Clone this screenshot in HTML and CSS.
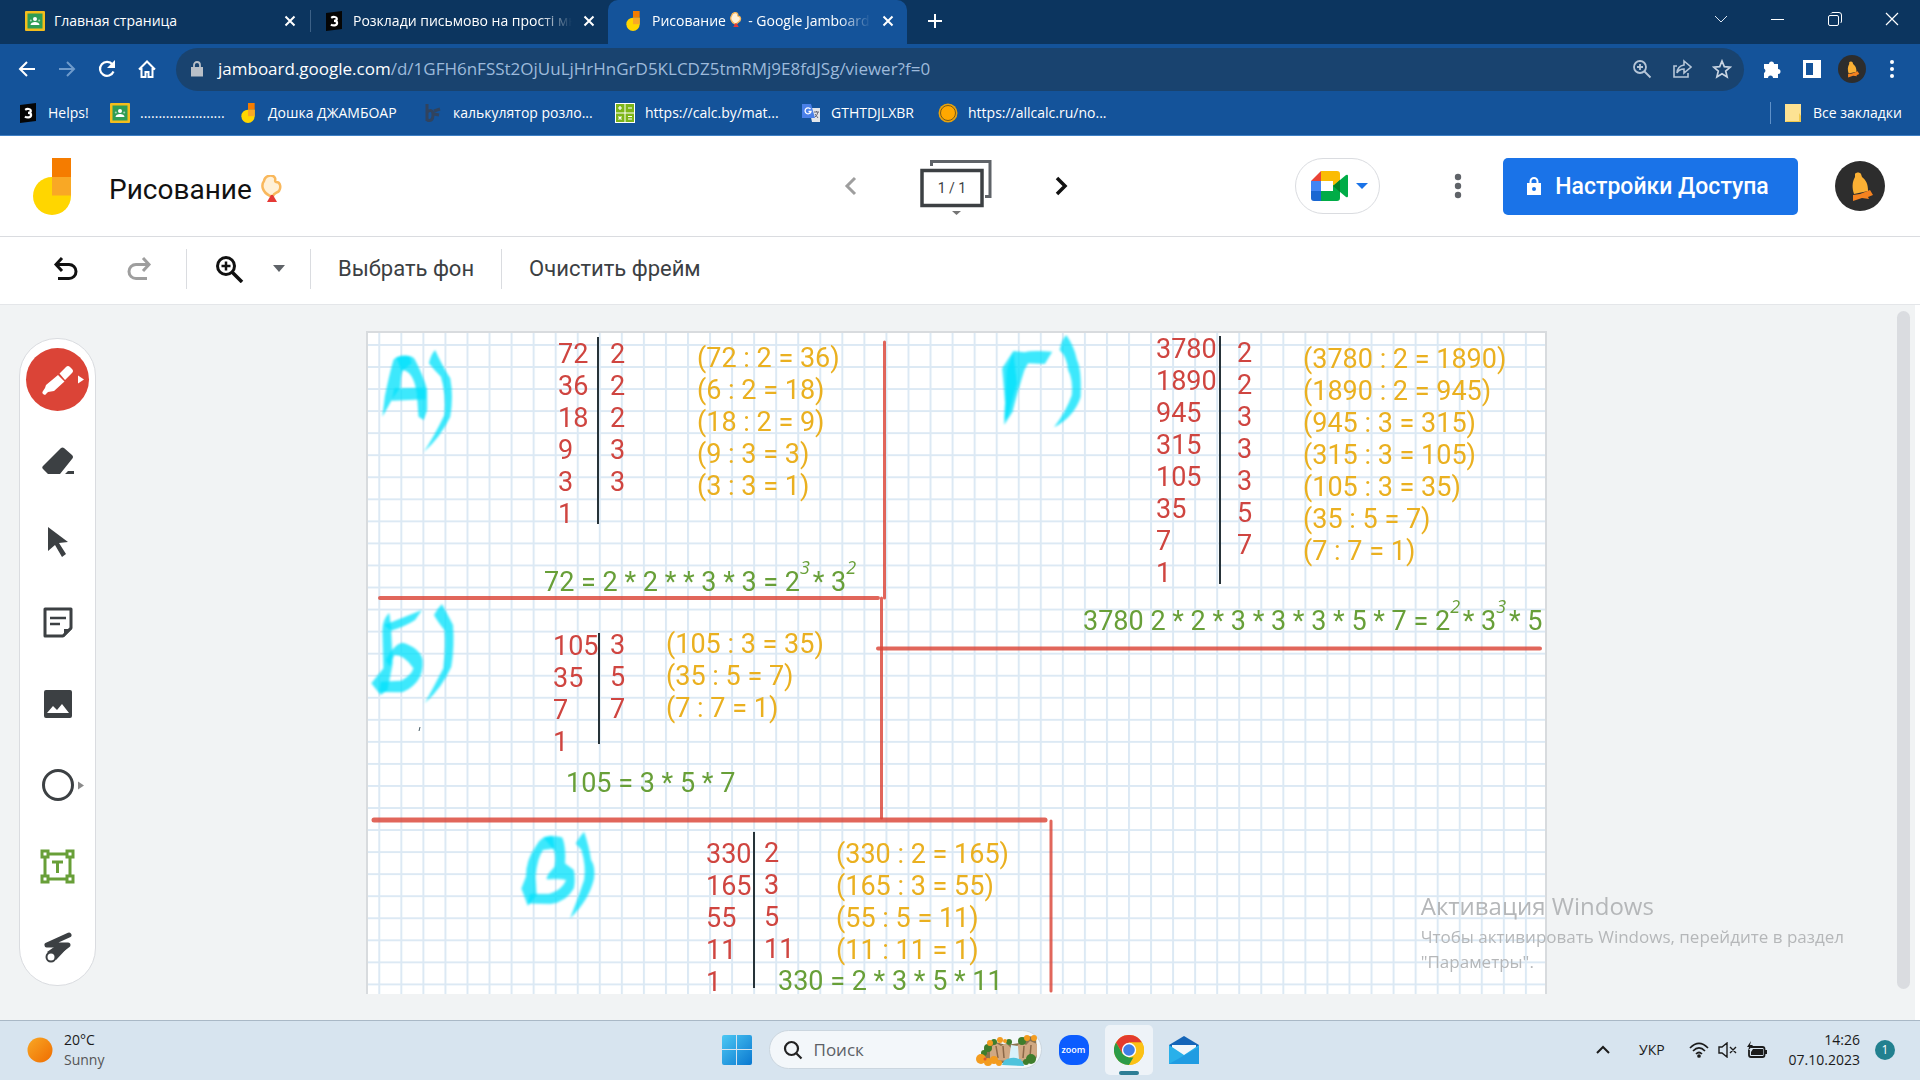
FILE: index.html
```html
<!DOCTYPE html>
<html lang="ru">
<head>
<meta charset="utf-8">
<title>Рисование - Google Jamboard</title>
<link rel="stylesheet" href="styles.css">
</head>
<body>
<svg width="0" height="0" class="defs" aria-hidden="true">
  <symbol id="classroom" viewBox="0 0 20 20"><rect width="20" height="20" rx="1" fill="#f4bd1c"/><rect x="2.500" y="2.500" width="15" height="15" fill="#2f9d55"/><circle cx="10" cy="8" r="2" fill="#fff"/><path d="M5.500 14c0-4 9-4 9 0z" fill="#fff"/><circle cx="5.800" cy="9.500" r="1" fill="#a5d6b4"/><circle cx="14.200" cy="9.500" r="1" fill="#a5d6b4"/></symbol>
  <symbol id="znanija" viewBox="0 0 20 20"><path d="M2 2l16-2v18l-16 2z" fill="#050505"/><path d="M7.200 6.800c2-1.500 5.600-1 5.600 1.200 0 1.400-1.500 1.900-2.800 1.900 1.600 0 3.100.6 3.100 2.200 0 2.500-4 3-6.200 1.500" fill="none" stroke="#fff" stroke-width="2.200"/></symbol>
  <symbol id="jam" viewBox="0 0 38 57"><path d="M19 0h19v19H19z" fill="#f57c00"/><path d="M19 19h19v19A19 19 0 1 1 19 19z" fill="#ffd600"/><path d="M19 19h19v18.500H19z" fill="#f9a825"/></symbol>
  <symbol id="x" viewBox="0 0 14 14"><path d="M2.500 2.500l9 9m0-9l-9 9" fill="none" stroke="currentColor" stroke-width="2"/></symbol>
  <symbol id="bell" viewBox="0 0 50 50"><circle cx="25" cy="25" r="25" fill="#2d2d2d"/><path d="M20 13c1-2 5-2 6 0l1 3c4 3 6 7 6 14l-14 3c-2-6-2-12 1-17z" fill="#fbb034"/><path d="M18 34l7-1 10-4 3 5-5 2 1 2-7-1-9 3v-3z" fill="#f5821f"/></symbol>
  <symbol id="balloon" viewBox="0 0 22 28"><path d="M9 21C1 17 0 10 3 6 4 0 12-1 14 3c1 2-1 3 1 4 5 0 5 6 3 9-2 2-5 2-6 5z" fill="#fff1d8" stroke="#f9b85c" stroke-width="2.500"/><path d="M10 20l-4 7h10l-4-7z" fill="#e53935"/></symbol>
</svg>

<header class="chrome">
  <div class="tabs">
    <div class="tab"><svg class="fav"><use href="#classroom"/></svg><span class="tab-title">Главная страница</span><button class="tab-close" aria-label="Закрыть"><svg><use href="#x"/></svg></button></div>
    <div class="tab tab-split"><svg class="fav"><use href="#znanija"/></svg><span class="tab-title fade">Розклади письмово на прості множники</span><button class="tab-close" aria-label="Закрыть"><svg><use href="#x"/></svg></button></div>
    <div class="tab active"><svg class="fav"><use href="#jam"/></svg><span class="tab-title fade">Рисование <svg class="mini"><use href="#balloon"/></svg> - Google Jamboard</span><button class="tab-close" aria-label="Закрыть"><svg><use href="#x"/></svg></button></div>
    <button class="new-tab" aria-label="Новая вкладка"><svg width="16" height="16"><path d="M8 1v14M1 8h14" stroke="#fff" stroke-width="2"/></svg></button>
    <div class="win">
      <button aria-label="Вкладки"><svg width="14" height="14"><path d="M1 4l6 6 6-6" fill="none" stroke="#dce6f2"/></svg></button>
      <button aria-label="Свернуть"><svg width="14" height="14"><path d="M0 7.500h13" stroke="#fff"/></svg></button>
      <button aria-label="Окно"><svg width="14" height="14" fill="none" stroke="#fff"><rect x=".5" y="3.500" width="10" height="10" rx="1.500"/><path d="M3 1.500q.5-1 2-1h6q2.500 0 2.500 2.500v6q0 1.500-1 2"/></svg></button>
      <button aria-label="Закрыть окно"><svg width="14" height="14"><path d="M1 1l12 12M13 1L1 13" stroke="#fff" stroke-width="1.200"/></svg></button>
    </div>
  </div>
  <div class="nav">
    <button aria-label="Назад"><svg class="i20" viewBox="0 0 20 20"><path d="M18 10H3m7-7l-7 7 7 7" fill="none" stroke="#fff" stroke-width="2"/></svg></button>
    <button aria-label="Вперёд"><svg class="i20" viewBox="0 0 20 20"><path d="M2 10h15m-7-7l7 7-7 7" fill="none" stroke="#6f9bcb" stroke-width="2"/></svg></button>
    <button aria-label="Обновить"><svg class="i20" viewBox="0 0 20 20"><path d="M16.500 12.500A7 7 0 1 1 15.500 5.500" fill="none" stroke="#fff" stroke-width="2.200"/><path d="M18 1v8h-8z" fill="#fff"/></svg></button>
    <button aria-label="Домой"><svg class="i20" viewBox="0 0 20 20"><path d="M2 10.500l8-8 8 8M4.500 9v9h4v-5h3v5h4V9" fill="none" stroke="#fff" stroke-width="2"/></svg></button>
    <div class="omni">
      <svg class="lock" viewBox="0 0 12 16"><path d="M0 6h12v9.500H0z" fill="#b9c0c8"/><path d="M3 6V4a3 3 0 0 1 6 0v2" fill="none" stroke="#b9c0c8" stroke-width="1.800"/></svg>
      <span class="url"><b>jamboard.google.com</b>/d/1GFH6nFSSt2OjUuLjHrHnGrD5KLCDZ5tmRMj9E8fdJSg/viewer?f=0</span>
      <input class="omni-input" type="text" aria-label="Адресная строка">
      <button aria-label="Масштаб"><svg class="i20" viewBox="0 0 20 20" fill="none" stroke="#b6c6d8" stroke-width="1.800"><circle cx="8" cy="8" r="6"/><path d="M12.500 12.500l6 6M8 5v6M5 8h6"/></svg></button>
      <button aria-label="Поделиться"><svg class="i20" viewBox="0 0 20 20" fill="none" stroke="#b6c6d8" stroke-width="1.600"><path d="M5 7H2v11h14v-4"/><path d="M12 2l7 6-7 6v-4q-5 0-7 4 .5-7 7-8z"/></svg></button>
      <button aria-label="Закладка"><svg class="i20" viewBox="0 0 20 20" fill="none" stroke="#c8d4e2" stroke-width="1.700"><path d="M10 2l2.300 5.600 6 .5-4.600 3.900 1.400 5.900-5.100-3.200-5.100 3.200 1.400-5.900L1.700 8.100l6-.5z"/></svg></button>
    </div>
    <button aria-label="Расширения"><svg class="i20" viewBox="0 0 20 20"><path d="M2 5h5a2.500 2.500 0 1 1 5 0h4v5a2.500 2.500 0 1 1 0 5v4h-5a2.500 2.500 0 0 0-5 0H2v-5a2.500 2.500 0 0 0 0-4.500z" fill="#fff"/></svg></button>
    <button aria-label="Боковая панель"><svg class="i20" viewBox="0 0 20 20"><path d="M1 1h18v18H1zm3 3v12h7V4z" fill="#fff" fill-rule="evenodd"/></svg></button>
    <button aria-label="Профиль"><svg class="i28"><use href="#bell"/></svg></button>
    <button aria-label="Меню"><svg class="i20" viewBox="0 0 20 20" fill="#fff"><circle cx="10" cy="3" r="2"/><circle cx="10" cy="10" r="2"/><circle cx="10" cy="17" r="2"/></svg></button>
  </div>
  <nav class="marks">
    <a href="#" class="m1"><svg><use href="#znanija"/></svg>Helps!</a>
    <a href="#" class="m2"><svg><use href="#classroom"/></svg>.......................</a>
    <a href="#" class="m3"><svg><use href="#jam"/></svg>Дошка ДЖАМБОАР</a>
    <a href="#" class="m4"><svg viewBox="0 0 20 20"><path d="M4 1v17M4 9q6-4 6 3t-6 5M11 8l6-2M11 11l5 1" fill="none" stroke="#30435e" stroke-width="3"/></svg>калькулятор розло...</a>
    <a href="#" class="m5"><svg viewBox="0 0 20 20"><rect width="20" height="20" fill="#fff"/><path d="M1 1h8.500v8.500H1zM10.500 1H19v8.500h-8.500zM1 10.500h8.500V19H1zM10.500 10.500H19V19h-8.500z" fill="#7cb518"/><path d="M3 5h4M5 3v4M13 5h4M3.500 13.500l3 3m0-3l-3 3M13 13.500h4M13 16h4" stroke="#fff" stroke-width="1.200"/></svg>https://calc.by/mat...</a>
    <a href="#" class="m6"><svg viewBox="0 0 20 20"><path d="M8 5h11v14h-8z" fill="#e3e6ea"/><path d="M1 1h9l4 14H1z" fill="#4a80e8"/><path d="M9.500 6a3 3 0 1 0 .5 2.500H7.500" fill="none" stroke="#fff" stroke-width="1.300"/><path d="M13 9h5M15.500 8v1m1.500 0q-1 4-3 5m0-3l3 4" fill="none" stroke="#667" stroke-width="1"/></svg>GTHTDJLXBR</a>
    <a href="#" class="m7"><svg viewBox="0 0 20 20"><circle cx="10" cy="10" r="9.500" fill="#e8a30c"/><circle cx="10" cy="10" r="7.500" fill="#ffa800" stroke="#7a5a18"/></svg>https://allcalc.ru/no...</a>
    <a href="#" class="all"><svg viewBox="0 0 20 20"><path d="M2 1h16v18H2z" fill="#fde293"/><path d="M16 10l2 3v6H2l2-1h12z" fill="#f2c94c"/></svg>Все закладки</a>
  </nav>
</header>

<section class="head">
  <div class="brand">
    <svg class="logo"><use href="#jam"/></svg>
    <h1>Рисование <svg class="emoji"><use href="#balloon"/></svg></h1>
  </div>
  <div class="pager">
    <button aria-label="Предыдущий кадр"><svg width="14" height="20" viewBox="0 0 14 20"><path d="M11 2l-8 8 8 8" fill="none" stroke="#9e9e9e" stroke-width="3"/></svg></button>
    <button class="frames" aria-label="Кадры"><svg width="72" height="58" viewBox="0 0 72 58" fill="none"><path d="M11.500 9V4.500H70V39.500h-5" stroke="#5f6368" stroke-width="3"/><rect x="2" y="13.500" width="60" height="35" stroke="#3c4043" stroke-width="3.500"/><path d="M32 54h9l-4.500 4z" fill="#757575"/></svg><span>1 / 1</span></button>
    <button aria-label="Следующий кадр"><svg width="14" height="20" viewBox="0 0 14 20"><path d="M3 2l8 8-8 8" fill="none" stroke="#111" stroke-width="3.500"/></svg></button>
  </div>
  <div class="actions">
    <button class="meet" aria-label="Google Meet"><svg width="38" height="30" viewBox="0 0 38 30"><path d="M10 0v10H0z" fill="#ea4335"/><path d="M0 10h10v10H0z" fill="#4285f4"/><path d="M0 20h10v10H3q-3 0-3-3z" fill="#1967d2"/><path d="M10 0h16q3 0 3 3v8l-7 5v-6H10z" fill="#fbbc04"/><path d="M10 20h12v-6l7 4v9q0 3-3 3H10z" fill="#00ac47"/><path d="M22 15L35 4q2-1 2 1v20q0 2-2 1z" fill="#00ac47"/><path d="M22 15l7-6v12z" fill="#00832d"/></svg><svg width="12" height="6"><path d="M0 0h12l-6 6z" fill="#1a73e8"/></svg></button>
    <button class="more" aria-label="Ещё"><svg width="8" height="26" fill="#5f6368"><circle cx="4" cy="4" r="3.200"/><circle cx="4" cy="13" r="3.200"/><circle cx="4" cy="22" r="3.200"/></svg></button>
    <button class="share"><svg width="16" height="18" viewBox="0 0 16 18"><path d="M1 6h14v12H1z" fill="#fff"/><path d="M4.500 6V4.500a3.500 3.500 0 0 1 7 0V6" fill="none" stroke="#fff" stroke-width="2"/><circle cx="8" cy="12" r="2" fill="#1a73e8"/></svg>Настройки Доступа</button>
    <button class="avatar" aria-label="Аккаунт"><svg><use href="#bell"/></svg></button>
  </div>
</section>

<section class="bar">
  <button class="b-undo" aria-label="Отменить"><svg width="26" height="26" viewBox="0 0 26 26"><path d="M9 2L3 8.500 9 15M3 8.500h13a7 7 0 0 1 0 14H5" fill="none" stroke="#111" stroke-width="3"/></svg></button>
  <button class="b-redo" aria-label="Повторить"><svg width="26" height="26" viewBox="0 0 26 26"><path d="M17 2l6 6.500-6 6.500M23 8.500H10a7 7 0 0 0 0 14h11" fill="none" stroke="#9e9e9e" stroke-width="3"/></svg></button>
  <button class="b-zoom" aria-label="Масштаб"><svg width="30" height="28" viewBox="0 0 30 28" fill="none" stroke="#111"><circle cx="11" cy="11" r="8.500" stroke-width="3"/><path d="M17 17l10 10" stroke-width="3.500"/><path d="M11 6.500v9M6.500 11h9" stroke-width="2.500"/></svg></button>
  <button class="b-menu" aria-label="Список масштабов"><svg width="12" height="7"><path d="M0 0h12l-6 7z" fill="#5f6368"/></svg></button>
  <button class="b-text">Выбрать фон</button>
  <button class="b-text">Очистить фрейм</button>
</section>

<main class="work">
  <div class="palette">
    <button class="pen" aria-label="Перо"><svg viewBox="0 0 32 32"><path d="M17.500 9.500L24 3q2-2 4 0l2 2q2 2 0 4l-7 7zM16 11l6.500 6.500L12 27l-6 1-3 3q-4-1-2-4l2-3 1-3z" fill="#fff"/></svg><svg class="arrow" viewBox="0 0 6 8"><path d="M0 0l6 4-6 4z" fill="#fff"/></svg></button>
    <button aria-label="Ластик"><svg viewBox="0 0 32 32"><path d="M1 21L19 3q1.500-1 3 0l8 7q2 2 0 4L18 29H6l-5-5q-1.500-1.500 0-3zM26 26h6v3h-9z" fill="#3c4043"/></svg></button>
    <button aria-label="Выделение"><svg viewBox="0 0 32 32"><path d="M6 1l20 15-9 1 7 11-4 3-7-12-7 6z" fill="#3c4043"/></svg></button>
    <button aria-label="Заметка"><svg viewBox="0 0 32 32"><path d="M3 2h26v19l-8 8H3z" fill="none" stroke="#3c4043" stroke-width="3" stroke-linejoin="round"/><path d="M22 30v-8h8z" fill="#3c4043"/><path d="M8 11h16M8 17h10" stroke="#3c4043" stroke-width="2.600"/></svg></button>
    <button aria-label="Изображение"><svg viewBox="0 0 32 32"><path d="M4 2h24q2 0 2 2v24q0 2-2 2H4q-2 0-2-2V4q0-2 2-2zM5 25h22l-7-9-5 6-4-4z" fill="#3c4043" fill-rule="evenodd"/></svg></button>
    <button aria-label="Фигура"><svg viewBox="0 0 32 32"><circle cx="16" cy="16" r="14.500" fill="none" stroke="#3c4043" stroke-width="3"/></svg><svg class="arrow" viewBox="0 0 6 8"><path d="M0 0l6 4-6 4z" fill="#8a8a8a"/></svg></button>
    <button aria-label="Текст"><svg class="wide" viewBox="0 0 35 35" fill="none" stroke="#689f38"><path d="M5 5h25v25H5z" stroke-width="3"/><path d="M2 2h6v6H2zM27 2h6v6h-6zM2 27h6v6H2zM27 27h6v6h-6z" fill="#fff" stroke-width="3"/><path d="M12 13h11M17.500 13v11" stroke-width="3"/></svg></button>
    <button aria-label="Лазерная указка"><svg viewBox="0 0 32 32"><path d="M5 14L27 4M5 14h21L10 26" fill="none" stroke="#3c4043" stroke-width="5" stroke-linecap="round" stroke-linejoin="round"/><path d="M5 21L15 14l13 0L14 29z" fill="#3c4043"/><circle cx="9" cy="26" r="4.500" fill="#fff" stroke="#3c4043" stroke-width="2"/></svg></button>
  </div>

  <div class="board">
    <svg class="ink" role="img" aria-label="А) Б) В) Г)">
      <defs>
        <pattern id="grid" width="22.050" height="22.050" patternUnits="userSpaceOnUse" x="10.300" y="11"><path d="M0 1h23M1 0v23" stroke="#dce9f4" stroke-width="2"/></pattern>
        <filter id="soft" x="-5%" y="-5%" width="110%" height="110%"><feGaussianBlur stdDeviation=".8"/></filter>
      </defs>
      <rect width="100%" height="100%" fill="url(#grid)"/>
      <!-- highlighter strokes -->
      <g fill="#00e1fb" fill-opacity=".76" filter="url(#soft)">
        <g transform="translate(-8 -13) scale(.3444 .3333)">
          <path d="M65 290L72 230Q88 150 98 118Q120 100 145 110L150 130L132 145Q118 150 118 200L95 235Z"/>
          <path d="M105 112Q150 100 160 120Q185 170 195 210L195 270L185 300L170 290L165 220Q155 150 120 150Z"/>
          <path d="M100 205L190 203L190 238L92 242Z"/>
          <path d="M218 90Q240 140 262 175Q272 230 262 290Q235 350 185 396Q215 350 245 285Q250 220 235 170Q215 150 200 130Q205 105 218 90Z"/>
        </g>
        <g transform="translate(-8 257) scale(.3444 .3333)">
          <path d="M85 68Q65 90 65 120L68 235L33 280L60 315L80 300L95 220L90 110Z"/>
          <path d="M70 105Q120 85 180 60L160 90Q130 110 90 122Z"/>
          <path d="M75 210Q100 160 125 158Q175 175 182 210Q185 250 165 275Q140 305 115 307L55 306L60 275L120 272Q150 255 155 235Q130 195 100 195L85 230Z"/>
          <path d="M238 42Q255 75 270 105Q275 170 265 230Q240 290 188 340Q215 290 242 235Q250 160 245 120Q225 95 215 75Q225 55 238 42Z"/>
        </g>
        <g transform="translate(112 467) scale(.3827 .3333)">
          <path d="M190 108Q160 105 145 140Q120 180 120 230L108 265L125 318L148 285L145 230Q150 170 165 150L195 145Z"/>
          <path d="M165 112Q190 105 215 112Q225 140 222 190L245 210Q250 240 245 265Q225 305 185 312L125 310L130 282L180 282Q215 270 225 240Q205 235 175 238Q170 230 195 200Q200 160 190 145Z"/>
          <path d="M272 95Q285 140 290 180Q302 200 298 235Q285 300 235 355Q255 300 272 240Q278 200 265 150L250 130Q260 110 272 95Z"/>
        </g>
        <g transform="translate(612 -13) scale(.37 .3333)">
          <path d="M90 93L60 145L68 250L65 315L88 275Q100 220 120 150L130 130L175 132L195 95Q140 90 120 97Z"/>
          <path d="M90 97L100 190L75 290L66 300L72 150Z"/>
          <path d="M233 45Q255 80 262 120Q275 150 272 230Q255 290 200 322Q235 270 248 225Q252 180 238 150Q235 110 215 90Q220 60 233 45Z"/>
        </g>
      </g>
      <g stroke="#db4437" stroke-opacity=".82" stroke-width="4" stroke-linecap="round">
        <path d="M12 265H510M510 315.500H1172"/>
        <path d="M6 487H677" stroke-width="5"/>
        <path d="M516.500 9V265M513.500 265V485M683 488V658" stroke-width="3"/>
      </g>
      <path d="M230 4V191M231 300V411M386 499V655M852 3V251" stroke="#263238" stroke-width="2"/>
      <path d="M51 398l1-4" stroke="#455a64"/>
    </svg>

    <div class="note red a-n">72<br>36<br>18<br>9<br>3<br>1</div>
    <div class="note red a-d">2<br>2<br>2<br>3<br>3</div>
    <div class="note amber a-c">(72 : 2 = 36)<br>(6 : 2 = 18)<br>(18 : 2 = 9)<br>(9 : 3 = 3)<br>(3 : 3 = 1)</div>
    <div class="note green a-r">72 = 2 * 2 * * 3 * 3 = 2<sup>3</sup> * 3<sup>2</sup></div>

    <div class="note red b-n">105<br>35<br>7<br>1</div>
    <div class="note red b-d">3<br>5<br>7</div>
    <div class="note amber b-c">(105 : 3 = 35)<br>(35 : 5 = 7)<br>(7 : 7 = 1)</div>
    <div class="note green b-r">105 = 3 * 5 * 7</div>

    <div class="note red v-n">330<br>165<br>55<br>11<br>1</div>
    <div class="note red v-d">2<br>3<br>5<br>11</div>
    <div class="note amber v-c">(330 : 2 = 165)<br>(165 : 3 = 55)<br>(55 : 5 = 11)<br>(11 : 11 = 1)</div>
    <div class="note green v-r">330 = 2 * 3 * 5 * 11</div>

    <div class="note red g-n">3780<br>1890<br>945<br>315<br>105<br>35<br>7<br>1</div>
    <div class="note red g-d">2<br>2<br>3<br>3<br>3<br>5<br>7</div>
    <div class="note amber g-c">(3780 : 2 = 1890)<br>(1890 : 2 = 945)<br>(945 : 3 = 315)<br>(315 : 3 = 105)<br>(105 : 3 = 35)<br>(35 : 5 = 7)<br>(7 : 7 = 1)</div>
    <div class="note green g-r">3780 2 * 2 * 3 * 3 * 3 * 5 * 7 = 2<sup>2</sup> * 3<sup>3</sup> * 5</div>
  </div>

  <div class="scroll"></div>
  <div class="activate"><h2>Активация Windows</h2><p>Чтобы активировать Windows, перейдите в раздел<br>"Параметры".</p></div>
</main>

<footer class="task">
  <div class="weather"><svg width="26" height="26"><defs><linearGradient id="sun" x1="0" y1="0" x2="1" y2="1"><stop stop-color="#f9a825"/><stop offset="1" stop-color="#ef6c00"/></linearGradient></defs><circle cx="13" cy="13" r="12.500" fill="url(#sun)"/></svg><div>20°C<br><span>Sunny</span></div></div>
  <div class="apps">
    <button class="start" aria-label="Пуск"><svg width="30" height="30"><defs><linearGradient id="win" x1="0" y1="0" x2="1" y2="1"><stop stop-color="#4cc8f4"/><stop offset="1" stop-color="#0a78d0"/></linearGradient></defs><path d="M0 2q0-2 2-2h12v14H0zM15 0h13q2 0 2 2v12H15zM0 15h14v15H2q-2 0-2-2zM15 15h15v13q0 2-2 2H15z" fill="url(#win)"/></svg></button>
    <label class="search"><svg width="20" height="20" viewBox="0 0 20 20" fill="none" stroke="#222" stroke-width="2.200"><circle cx="8.500" cy="8.500" r="6.500"/><path d="M13.500 13.500l5 5"/></svg><input type="text" placeholder="Поиск" aria-label="Поиск">
      <svg class="art" viewBox="0 0 62 32"><path d="M8 22Q6 8 20 8l10 3 14-2 4-6q8-2 12 1l1 16q0 8-8 9H12z" fill="#8a7350"/><path d="M14 26V14l6-5 5 3 5-3 5 5v13zM42 27l-2-14 5-5 5 3 4-4 7 3v11l-6 7z" fill="#d0a883"/><path d="M20 12l2 12M27 12l1 12M48 12l-1 12M55 11l-1 12" stroke="#8c6848" stroke-width="1.500"/><path d="M35 11l7 1 1 14H33z" fill="#d9f1fa"/><path d="M26 31q1-6 9-7t12 4l1 4z" fill="#4fc3dc"/><g fill="#3f7d2c"><circle cx="12" cy="14" r="4"/><circle cx="18" cy="8" r="3"/><circle cx="8" cy="19" r="3"/><circle cx="46" cy="7" r="4"/><circle cx="55" cy="25" r="5"/><circle cx="50" cy="28" r="3"/><circle cx="33" cy="8" r="3"/></g><g fill="#f39c1f"><circle cx="14" cy="9" r="3"/><circle cx="24" cy="6" r="3"/><circle cx="29" cy="7" r="2"/><circle cx="51" cy="4" r="3"/><circle cx="58" cy="4" r="3"/><circle cx="5" cy="25" r="5"/><circle cx="12" cy="28" r="4"/><circle cx="18" cy="26" r="4"/><circle cx="23" cy="29" r="3"/></g><circle cx="9" cy="25" r="1.500" fill="#e0562b"/></svg></label>
    <button class="zoom" aria-label="Zoom">zoom</button>
    <button class="gc" aria-label="Chrome"><svg width="30" height="30" viewBox="0 0 30 30"><circle cx="15" cy="15" r="15" fill="#fbbc04"/><path d="M2 7.500A15 15 0 0 1 28 7.500H15L8.500 18.700z" fill="#e33b2e"/><path d="M2 7.500L8.500 18.700 15 22.500h6.500L15 30A15 15 0 0 1 2 7.500z" fill="#2b9b48"/><path d="M21.500 18.700L15 30A15 15 0 0 0 28 7.500H15z" fill="#fbc116"/><circle cx="15" cy="15" r="7.200" fill="#fff"/><circle cx="15" cy="15" r="5.800" fill="#3f7ee8"/></svg></button>
    <button class="mail" aria-label="Почта"><svg width="30" height="28" viewBox="0 0 30 28"><path d="M0 9L15 0l15 9v4H0z" fill="#1565b8"/><path d="M3 9h24v10H3z" fill="#f2f7fb"/><path d="M0 9l15 10L30 9v19H0z" fill="#29b0ea"/><path d="M0 28l30-17v17z" fill="#1a8fdc" fill-opacity=".6"/></svg></button>
  </div>
  <div class="tray">
    <button aria-label="Скрытые значки"><svg width="14" height="10"><path d="M1 8l6-6 6 6" fill="none" stroke="#1b1b1b" stroke-width="2"/></svg></button>
    <button class="lang">УКР</button>
    <button class="sys" aria-label="Сеть, звук, батарея">
      <svg width="20" height="16" viewBox="0 0 20 16" fill="none" stroke="#1b1b1b" stroke-width="1.700"><path d="M1 6q9-9 18 0M4 9q6-6 12 0M7 12q3-3 6 0"/><circle cx="10" cy="14" r="1" fill="#1b1b1b"/></svg>
      <svg width="20" height="16" viewBox="0 0 20 16" fill="none" stroke="#1b1b1b" stroke-width="1.400"><path d="M1 5h3l5-4v14l-5-4H1zM12 5l6 6m0-6l-6 6"/></svg>
      <svg width="20" height="18" viewBox="0 0 20 18"><path d="M3.500 6h12q2 0 2 2v6q0 2-2 2H4q-2 0-2-2V9" fill="none" stroke="#1b1b1b" stroke-width="1.800"/><path d="M6 8h10v6H4V11z" fill="#1b1b1b"/><path d="M18 9h2v4h-2zM4 0L0 6h2L1 10l5-6H3z" fill="#1b1b1b"/></svg>
    </button>
    <div class="clock">14:26<br>07.10.2023</div>
    <span class="badge">1</span>
  </div>
</footer>
</body>
</html>
```
FILE: styles.css
```css
* { box-sizing: border-box; }
body {
  margin: 0;
  min-height: 100vh;
  display: flex;
  flex-direction: column;
  font-family: Roboto, "Liberation Sans", sans-serif;
  background: #fff;
  color: #202124;
  overflow: hidden;
}
.defs { position: absolute; }
button { border: 0; padding: 0; background: none; color: inherit; font: inherit; display: flex; align-items: center; justify-content: center; }
a { color: inherit; text-decoration: none; }
svg { flex: none; }
.i20 { width: 20px; height: 20px; }
.i28 { width: 28px; height: 28px; }

/* browser frame */
.chrome { background: #14539a; color: #fff; font: 15px/20px "Open Sans", "Noto Sans", sans-serif; border-bottom: 1px solid #3f7fc4; }
.tabs { display: flex; height: 44px; background: #0c355f; padding-left: 10px; }
.tab { width: 299px; display: flex; align-items: center; padding: 0 11px 2px 15px; position: relative; gap: 9px; }
.tab-split::before { content: ""; position: absolute; left: 1px; top: 10px; width: 1px; height: 22px; background: #3d6187; }
.tab.active { background: #14539a; border-radius: 10px 10px 0 0; }
.fav { width: 20px; height: 20px; }
.tab-title { flex: 1; white-space: nowrap; overflow: hidden; font-size: 14px; }
.fade { -webkit-mask-image: linear-gradient(90deg, #000 85%, transparent); mask-image: linear-gradient(90deg, #000 85%, transparent); }
.mini { width: 12px; height: 16px; margin-right: 3px; vertical-align: -2px; }
.tab-close { width: 16px; height: 16px; }
.tab-close svg { width: 14px; height: 14px; }
.new-tab { width: 56px; padding-bottom: 2px; }
.win { margin-left: auto; display: flex; }
.win button { width: 57px; height: 38px; }
.nav { display: flex; align-items: center; height: 50px; padding-left: 7px; padding-right: 8px; }
.nav > button { width: 40px; height: 40px; }
.omni { flex: 1; position: relative; display: flex; align-items: center; height: 43px; border-radius: 22px; background: #19436f; margin: 0 8px 0 9px; padding: 0 2px 0 15px; }
.omni button { width: 40px; height: 40px; position: relative; }
.lock { width: 12px; height: 16px; margin-right: 15px; }
.url { flex: 1; font-size: 17px; line-height: 24px; color: #9dbadb; white-space: nowrap; }
.url b { font-weight: 400; color: #fff; }
.omni-input { position: absolute; inset: 0; width: 100%; border: 0; background: transparent; outline: 0; }
.marks { display: flex; height: 41px; align-items: center; padding: 0 18px 3px; font-size: 14px; white-space: nowrap; }
.marks a { display: flex; align-items: center; gap: 10px; }
.marks svg { width: 20px; height: 20px; }
.m1 { width: 92px; }
.m2 { width: 128px; }
.m3 { width: 185px; }
.m4 { width: 192px; }
.m5 { width: 186px; }
.m6 { width: 137px; }
.all { margin-left: auto; border-left: 1px solid #5f91c9; padding-left: 12px; height: 22px; }

/* board header */
.head { display: flex; align-items: center; height: 101px; padding: 0 35px 0 33px; border-bottom: 1px solid #dadce0; }
.brand { flex: 1 1 0; display: flex; align-items: center; }
.logo { width: 38px; height: 57px; }
h1 { margin: 8px 0 0 38px; font-size: 28px; line-height: 36px; font-weight: 400; color: #111; }
.emoji { width: 22px; height: 28px; margin-left: 2px; vertical-align: -4px; }
.pager { display: flex; align-items: center; gap: 62px; margin-right: 6px; }
.frames { position: relative; width: 72px; height: 58px; }
.frames span { position: absolute; left: 2px; top: 20px; width: 60px; text-align: center; font-size: 14px; line-height: 22px; color: #3c4043; }
.actions { flex: 1 1 0; display: flex; align-items: center; justify-content: flex-end; }
.meet { width: 85px; height: 56px; border: 1px solid #dadce0; border-radius: 28px; gap: 7px; padding-left: 3px; }
.more { width: 46px; height: 46px; margin: 0 22px 0 55px; }
.share { width: 295px; height: 57px; padding-right: 6px; background: #1a73e8; color: #fff; border-radius: 5px; font-size: 23px; font-weight: 500; gap: 13px; }
.avatar { margin-left: 37px; }
.avatar svg { width: 50px; height: 50px; }
.bar { display: flex; align-items: center; height: 68px; padding: 0 0 4px 43px; border-bottom: 1px solid #e4e6e9; }
.b-undo, .b-redo { width: 46px; height: 40px; }
.b-redo { margin-left: 27px; }
.b-zoom { width: 86px; height: 40px; margin-left: 24px; border-left: 1px solid #dadce0; }
.b-menu { width: 38px; height: 40px; padding-right: 24px; }
.b-text { height: 40px; padding: 0 27px; border-left: 1px solid #dadce0; font-size: 22px; line-height: 28px; color: #3c4043; }

/* workspace */
.work { flex: 1; display: flex; align-items: stretch; background: #f1f3f4; border-right: 5px solid #fff; position: relative; }
.palette { width: 77px; margin: 33px 0 34px 19px; padding: 9px 0 6px; background: #fff; border: 1px solid #dadce0; border-radius: 38px; display: flex; flex-direction: column; align-items: center; justify-content: space-between; }
.palette button { width: 63px; height: 63px; border-radius: 50%; position: relative; }
.palette svg { width: 32px; height: 32px; }
.palette .wide { width: 35px; height: 35px; }
.palette .pen { background: #db4437; }
.palette .arrow { position: absolute; right: 5px; top: 27px; width: 6px; height: 9px; }
.board { flex: 1; margin: 26px 368px 26px 270px; background: #fff; border: 2px solid #d8dbde; border-bottom: 0; position: relative; }
.ink { position: absolute; left: 0; top: 0; width: 100%; height: 100%; }
.scroll { position: absolute; right: 5px; top: 6px; bottom: 31px; width: 13px; border-radius: 7px; background: #dadce0; }
.activate { position: absolute; right: 71px; bottom: 46px; color: #b5b7b9; font-family: "Open Sans", "Noto Sans", sans-serif; white-space: nowrap; }
.activate h2 { margin: 0; font-size: 24px; line-height: 36px; font-weight: 400; }
.activate p { margin: 0; font-size: 17px; line-height: 25px; }

/* text placed on the canvas */
.note { position: absolute; font-size: 27px; line-height: 32px; white-space: nowrap; }
.note sup { font: italic 18px/0 "Open Sans", sans-serif; vertical-align: 17px; margin-right: -4px; }
.red { color: #cf4540; }
.amber { color: #eab020; }
.green { color: #689f38; }
.a-n { left: 190px; top: 5px; }
.a-d { left: 242px; top: 5px; }
.a-c { left: 329px; top: 9px; }
.a-r { left: 176px; top: 233px; }
.b-n { left: 185px; top: 297px; }
.b-d { left: 242px; top: 296px; }
.b-c { left: 298px; top: 295px; }
.b-r { left: 198px; top: 434px; }
.v-n { left: 338px; top: 505px; }
.v-d { left: 396px; top: 504px; }
.v-c { left: 468px; top: 505px; }
.v-r { left: 410px; top: 632px; }
.g-n { left: 788px; top: 0; }
.g-d { left: 869px; top: 4px; }
.g-c { left: 935px; top: 10px; }
.g-r { left: 715px; top: 272px; }

/* taskbar */
.task { height: 60px; background: #d7e4ef; border-top: 1px solid #a9b8c6; display: flex; align-items: center; padding: 0 25px 2px 27px; font: 14px/20px "Open Sans", "Noto Sans", sans-serif; color: #1b1b1b; }
.weather { flex: 1; display: flex; align-items: center; gap: 11px; }
.weather span { color: #555; }
.apps { display: flex; align-items: center; height: 58px; margin-right: 2px; }
.search { width: 273px; height: 39px; margin: 0 17px; padding: 0 3px 0 13px; border-radius: 20px; background: #f3f7fa; border: 1px solid #cbd6df; display: flex; align-items: center; gap: 11px; }
.search input { flex: 1; min-width: 0; border: 0; background: transparent; padding: 0; outline: 0; font: 17px/24px "Open Sans", "Noto Sans", sans-serif; }
.search input::placeholder { color: #5c6066; opacity: 1; }
.art { width: 62px; height: 32px; }
.zoom { width: 30px; height: 30px; border-radius: 12px; background: #0b5cff; color: #fff; font-size: 9px; line-height: 12px; font-weight: 600; }
.gc { width: 48px; height: 50px; margin: 0 16px; background: #eef3f8; border-radius: 5px; position: relative; }
.gc::after { content: ""; position: absolute; left: 14px; bottom: 0; width: 20px; height: 4px; border-radius: 2px; background: #2d7d95; }
.tray { flex: 1; display: flex; align-items: center; justify-content: flex-end; }
.lang { margin: 0 24px 0 29px; }
.sys { gap: 9px; }
.clock { margin-left: 22px; text-align: right; }
.badge { margin-left: 15px; width: 20px; height: 20px; border-radius: 50%; background: #22808f; color: #fff; text-align: center; font-size: 12px; line-height: 20px; }
```
